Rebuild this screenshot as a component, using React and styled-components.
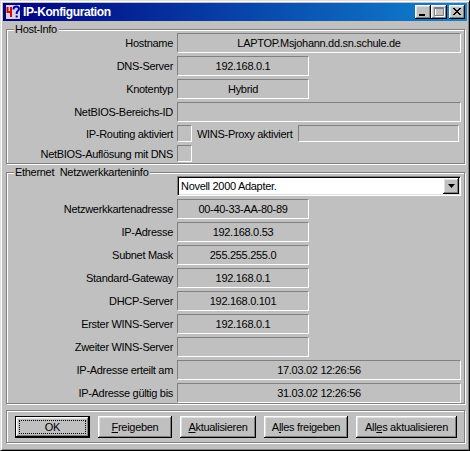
import React from "react";
import styled, { createGlobalStyle, css } from "styled-components";

const GlobalStyle = createGlobalStyle`
  html, body {
    margin: 0;
    padding: 0;
    background: #c0c0c0;
  }
  body {
    font-family: "Liberation Sans", Arial, sans-serif;
    font-size: 11px;
    letter-spacing: -0.3px;
    color: #000;
  }
`;

const bevel = css`
  box-shadow: inset -1px -1px #000, inset 1px 1px #fff, inset -2px -2px #808080,
    inset 2px 2px #dfdfdf;
`;

const Window = styled.div`
  box-sizing: border-box;
  width: 470px;
  height: 451px;
  background: #c0c0c0;
  border: 1px solid;
  border-color: #dfdfdf #000 #000 #dfdfdf;
  box-shadow: inset 1px 1px #fff, inset -1px -1px #808080;
  padding: 2px;
  display: flex;
  flex-direction: column;
`;

const TitleBar = styled.div`
  flex: none;
  height: 18px;
  display: flex;
  align-items: center;
  padding: 0 2px;
  background: linear-gradient(90deg, #000080, #1084d0);
`;

const TitleText = styled.span`
  flex: 1;
  margin-left: 2px;
  color: #fff;
  font-weight: bold;
  font-size: 12px;
  letter-spacing: -0.4px;
`;

const CaptionButton = styled.div`
  box-sizing: border-box;
  width: 16px;
  height: 14px;
  margin-left: ${(p) => p.$gap || 0}px;
  background: #c0c0c0;
  display: flex;
  align-items: center;
  justify-content: center;
  ${bevel}
`;

const Body = styled.div`
  flex: 1;
  display: flex;
  flex-direction: column;
  padding: 0 2px 0 3px;
`;

const Group = styled.div`
  position: relative;
  box-sizing: border-box;
  margin-top: ${(p) => p.$gap}px;
  padding: ${(p) => p.$pad};
  border: 1px solid #808080;
  box-shadow: inset 1px 1px #fff, 1px 1px #fff;
`;

const Caption = styled.span`
  position: absolute;
  top: -7px;
  left: 7px;
  padding: 0 2px 0 1px;
  line-height: 13px;
  white-space: pre;
  background: #c0c0c0;
`;

const Fields = styled.div`
  display: grid;
  grid-template-columns: 166px 1fr;
  column-gap: 4px;
  row-gap: 3px;
  align-items: center;
`;

const Label = styled.div`
  text-align: right;
  white-space: nowrap;
`;

const Field = styled.div`
  box-sizing: border-box;
  width: ${(p) => (p.$w ? `${p.$w}px` : "100%")};
  height: ${(p) => p.$h || 20}px;
  flex: ${(p) => (p.$w ? "none" : 1)};
  margin-right: ${(p) => p.$mr || 0}px;
  border: 1px solid;
  border-color: #808080 #fff #fff #808080;
  display: flex;
  align-items: center;
  justify-content: center;
  white-space: nowrap;
`;

const Inline = styled.div`
  display: flex;
  align-items: center;
`;

const InlineLabel = styled.span`
  margin: 0 6px 0 5px;
  white-space: nowrap;
`;

const Select = styled.div`
  box-sizing: border-box;
  height: 20px;
  background: #fff;
  border: 1px solid;
  border-color: #808080 #fff #fff #808080;
  box-shadow: inset 1px 1px #000, inset -1px -1px #dfdfdf;
  display: flex;
  align-items: center;
  padding: 1px 1px 1px 3px;
`;

const SelectText = styled.span`
  flex: 1;
  white-space: nowrap;
`;

const ArrowButton = styled.div`
  box-sizing: border-box;
  width: 16px;
  height: 16px;
  background: #c0c0c0;
  display: flex;
  align-items: center;
  justify-content: center;
  ${bevel}
`;

const ButtonBar = styled(Group)`
  display: flex;
  justify-content: space-between;
`;

const PushButton = styled.button`
  box-sizing: border-box;
  width: ${(p) => p.$w}px;
  height: 22px;
  padding: 0;
  border: none;
  background: #c0c0c0;
  font: inherit;
  letter-spacing: inherit;
  color: #000;
  display: flex;
  align-items: stretch;
  ${bevel}
  ${(p) =>
    p.$default &&
    css`
      border: 1px solid #000;
    `}
`;

const ButtonFace = styled.span`
  flex: 1;
  display: flex;
  align-items: center;
  justify-content: center;
  margin: 3px;
  border: 1px dotted ${(p) => (p.$focus ? "#000" : "transparent")};
  white-space: pre;
`;

const AppIcon = () => (
  <svg width="16" height="16" viewBox="0 0 16 16">
    <rect x="1" y="1" width="14" height="14" fill="#d4d4e4" />
    <path d="M2.5 3v5h3.5V3M6 8v5" stroke="#e00000" strokeWidth="2" fill="none" />
    <path
      d="M8.5 5.5C8.5 3.3 9.6 2.5 11.2 2.5S14 3.4 14 5c0 1.7-2.3 2-2.3 4v1"
      stroke="#0000c0"
      strokeWidth="2"
      fill="none"
    />
    <rect x="10.7" y="11.5" width="2" height="2" fill="#0000c0" />
  </svg>
);

const hostRows = [
  { label: "Hostname", value: "LAPTOP.Msjohann.dd.sn.schule.de", wide: true },
  { label: "DNS-Server", value: "192.168.0.1" },
  { label: "Knotentyp", value: "Hybrid" },
  { label: "NetBIOS-Bereichs-ID", value: "", wide: true },
];

const adapterRows = [
  { label: "Netzwerkkartenadresse", value: "00-40-33-AA-80-89" },
  { label: "IP-Adresse", value: "192.168.0.53" },
  { label: "Subnet Mask", value: "255.255.255.0" },
  { label: "Standard-Gateway", value: "192.168.0.1" },
  { label: "DHCP-Server", value: "192.168.0.101" },
  { label: "Erster WINS-Server", value: "192.168.0.1" },
  { label: "Zweiter WINS-Server", value: "" },
  { label: "IP-Adresse erteilt am", value: "17.03.02 12:26:56", wide: true },
  { label: "IP-Adresse gültig bis", value: "31.03.02 12:26:56", wide: true },
];

const renderRows = (rows) =>
  rows.map((row) => (
    <React.Fragment key={row.label}>
      <Label>{row.label}</Label>
      <Field $w={row.wide ? 0 : 132}>{row.value}</Field>
    </React.Fragment>
  ));

export default function App() {
  return (
    <>
      <GlobalStyle />
      <Window>
        <TitleBar>
          <AppIcon />
          <TitleText>IP-Konfiguration</TitleText>
          <CaptionButton>
            <svg width="16" height="14" viewBox="0 0 16 14">
              <rect x="4" y="9" width="6" height="2" fill="#000" />
            </svg>
          </CaptionButton>
          <CaptionButton>
            <svg width="16" height="14" viewBox="0 0 16 14">
              <path d="M4 3h9v8H4z" fill="none" stroke="#fff" strokeWidth="1" transform="translate(0.5 0.5)" />
              <path d="M3 2h9v8H3z M3 3h9" fill="none" stroke="#808080" strokeWidth="1" transform="translate(0.5 0.5)" />
            </svg>
          </CaptionButton>
          <CaptionButton $gap={2}>
            <svg width="16" height="14" viewBox="0 0 16 14">
              <path d="M4 3l7 7M5 3l7 7M11 3l-7 7M12 3l-7 7" stroke="#000" strokeWidth="1" fill="none" />
            </svg>
          </CaptionButton>
        </TitleBar>

        <Body>
          <Group $gap={8} $pad="3px 3px 1px 0">
            <Caption>Host-Info</Caption>
            <Fields>
              {renderRows(hostRows)}
              <Label>IP-Routing aktiviert</Label>
              <Inline>
                <Field $w={15} $h={17} />
                <InlineLabel>WINS-Proxy aktiviert</InlineLabel>
                <Field $h={17} $mr={2} />
              </Inline>
              <Label>NetBIOS-Auflösung mit DNS</Label>
              <Inline>
                <Field $w={15} $h={17} />
              </Inline>
            </Fields>
          </Group>

          <Group $gap={8} $pad="3px 3px 0 0">
            <Caption>Ethernet  Netzwerkkarteninfo</Caption>
            <Fields>
              <span />
              <Select>
                <SelectText>Novell 2000 Adapter.</SelectText>
                <ArrowButton>
                  <svg width="7" height="4" viewBox="0 0 7 4">
                    <path d="M0 0h7L3.5 4z" fill="#000" />
                  </svg>
                </ArrowButton>
              </Select>
              {renderRows(adapterRows)}
            </Fields>
          </Group>

          <ButtonBar $gap={6} $pad="5px 7px 4px 8px">
            <PushButton $w={75} $default>
              <ButtonFace $focus>OK</ButtonFace>
            </PushButton>
            <PushButton $w={74}>
              <ButtonFace>
                <u>F</u>reigeben
              </ButtonFace>
            </PushButton>
            <PushButton $w={76}>
              <ButtonFace>
                <u>A</u>ktualisieren
              </ButtonFace>
            </PushButton>
            <PushButton $w={84}>
              <ButtonFace>
                A<u>l</u>les freigeben
              </ButtonFace>
            </PushButton>
            <PushButton $w={101}>
              <ButtonFace>
                All<u>e</u>s aktualisieren
              </ButtonFace>
            </PushButton>
          </ButtonBar>
        </Body>
      </Window>
    </>
  );
}
